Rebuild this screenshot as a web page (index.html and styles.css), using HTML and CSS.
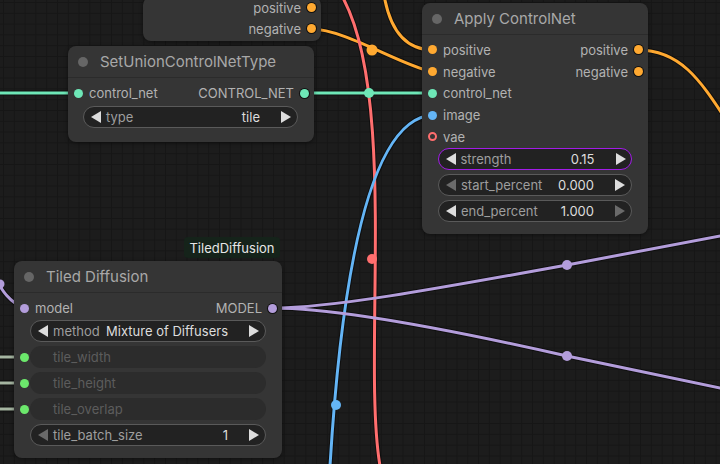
FILE: index.html
```html
<!DOCTYPE html>
<html>
<head>
<meta charset="utf-8">
<link rel="stylesheet" href="styles.css">
</head>
<body>
<div class="canvas">
  <svg class="links" width="720" height="464" viewBox="0 0 720 464">
    <g class="outline">
      <path d="M-5,93 L78,93"/>
      <path d="M305,93 L433,93"/>
      <path d="M311,29 C345,29 400,65 433,72"/>
      <path d="M384,-5 C390,30 405,50 433,50"/>
      <path d="M638,50 C680,50 700,80 725,118"/>
      <path d="M343,-2 C398,100 362,360 380,466"/>
      <path d="M433,115 C365,118 340,300 330,466"/>
      <path d="M273,308 C330,308 430,290 567,265 L725,235"/>
      <path d="M273,308 C330,308 430,325 567,356 L725,389"/>
      <path d="M-10,270 C0,285 5,300 24,308"/>
      <path d="M-5,357 L24,357"/>
      <path d="M-5,383 L24,383"/>
      <path d="M-5,409 L24,409"/>
    </g>
    <g class="link">
      <path class="l-cn" d="M-5,93 L78,93"/>
      <path class="l-cn" d="M305,93 L433,93"/>
      <path class="l-cond" d="M311,29 C345,29 400,65 433,72"/>
      <path class="l-cond" d="M384,-5 C390,30 405,50 433,50"/>
      <path class="l-cond" d="M638,50 C680,50 700,80 725,118"/>
      <path class="l-vae" d="M343,-2 C398,100 362,360 380,466"/>
      <path class="l-img" d="M433,115 C365,118 340,300 330,466"/>
      <path class="l-model" d="M273,308 C330,308 430,290 567,265 L725,235"/>
      <path class="l-model" d="M273,308 C330,308 430,325 567,356 L725,389"/>
      <path class="l-model" d="M-10,270 C0,285 5,300 24,308"/>
      <path class="l-int" d="M-5,357 L24,357"/>
      <path class="l-int" d="M-5,383 L24,383"/>
      <path class="l-int" d="M-5,409 L24,409"/>
    </g>
    <g class="mid">
      <circle class="f-cn" cx="369" cy="93" r="5"/>
      <circle class="f-cond" cx="372" cy="50" r="5.5"/>
      <circle class="f-vae" cx="372" cy="259" r="5"/>
      <circle class="f-img" cx="336" cy="405" r="5"/>
      <circle class="f-model" cx="567" cy="265" r="5"/>
      <circle class="f-model" cx="567" cy="356" r="5"/>
      <circle class="f-model" cx="0" cy="284" r="4.5"/>
    </g>
  </svg>

  <!-- partial node at top -->
  <div class="node node-top">
    <div class="slots">
      <div class="row row21"><span></span><span class="out">positive<i class="dot cond ring"></i></span></div>
      <div class="row row21"><span></span><span class="out">negative<i class="dot cond ring"></i></span></div>
    </div>
  </div>

  <!-- SetUnionControlNetType -->
  <div class="node node-union">
    <div class="title"><i class="tdot"></i><span>SetUnionControlNetType</span></div>
    <div class="body">
      <div class="row"><span class="in"><i class="dot cn"></i>control_net</span><span class="out">CONTROL_NET<i class="dot cn ring"></i></span></div>
      <div class="widgets gap2">
        <div class="widget">
          <svg class="arr" viewBox="0 0 10 12"><path d="M10,0 L10,12 L0,6 Z"/></svg>
          <span class="wl">type</span><span class="sp"></span><span class="wv">tile</span>
          <svg class="arr" viewBox="0 0 10 12"><path d="M0,0 L0,12 L10,6 Z"/></svg>
        </div>
      </div>
    </div>
  </div>

  <!-- Apply ControlNet -->
  <div class="node node-apply">
    <div class="title"><i class="tdot"></i><span>Apply ControlNet</span></div>
    <div class="body">
      <div class="row rowa"><span class="in"><i class="dot cond"></i>positive</span><span class="out">positive<i class="dot cond ring"></i></span></div>
      <div class="row rowa"><span class="in"><i class="dot cond"></i>negative</span><span class="out">negative<i class="dot cond ring"></i></span></div>
      <div class="row rowa"><span class="in"><i class="dot cn"></i>control_net</span></div>
      <div class="row rowa"><span class="in"><i class="dot img"></i>image</span></div>
      <div class="row rowa"><span class="in"><i class="dot vae hollow"></i>vae</span></div>
      <div class="widgets gap0">
        <div class="widget active">
          <svg class="arr" viewBox="0 0 10 12"><path d="M10,0 L10,12 L0,6 Z"/></svg>
          <span class="wl">strength</span><span class="sp"></span><span class="wv">0.15</span>
          <svg class="arr" viewBox="0 0 10 12"><path d="M0,0 L0,12 L10,6 Z"/></svg>
        </div>
        <div class="widget">
          <svg class="arr dim" viewBox="0 0 10 12"><path d="M10,0 L10,12 L0,6 Z"/></svg>
          <span class="wl">start_percent</span><span class="sp"></span><span class="wv">0.000</span>
          <svg class="arr" viewBox="0 0 10 12"><path d="M0,0 L0,12 L10,6 Z"/></svg>
        </div>
        <div class="widget">
          <svg class="arr" viewBox="0 0 10 12"><path d="M10,0 L10,12 L0,6 Z"/></svg>
          <span class="wl">end_percent</span><span class="sp"></span><span class="wv">1.000</span>
          <svg class="arr dim" viewBox="0 0 10 12"><path d="M0,0 L0,12 L10,6 Z"/></svg>
        </div>
      </div>
    </div>
  </div>

  <div class="badge">TiledDiffusion</div>

  <!-- Tiled Diffusion -->
  <div class="node node-tiled">
    <div class="title"><i class="tdot"></i><span>Tiled Diffusion</span></div>
    <div class="body">
      <div class="row"><span class="in"><i class="dot model"></i>model</span><span class="out">MODEL<i class="dot model ring"></i></span></div>
      <div class="widgets gap1">
        <div class="widget">
          <svg class="arr" viewBox="0 0 10 12"><path d="M10,0 L10,12 L0,6 Z"/></svg>
          <span class="wl">method</span><span class="sp"></span><span class="wv">Mixture of Diffusers</span>
          <svg class="arr" viewBox="0 0 10 12"><path d="M0,0 L0,12 L10,6 Z"/></svg>
        </div>
        <div class="wrow"><i class="dot int wdot"></i><div class="widget off"><span class="wl">tile_width</span></div></div>
        <div class="wrow"><i class="dot int wdot"></i><div class="widget off"><span class="wl">tile_height</span></div></div>
        <div class="wrow"><i class="dot int wdot"></i><div class="widget off"><span class="wl">tile_overlap</span></div></div>
        <div class="widget">
          <svg class="arr dim" viewBox="0 0 10 12"><path d="M10,0 L10,12 L0,6 Z"/></svg>
          <span class="wl">tile_batch_size</span><span class="sp"></span><span class="wv">1</span>
          <svg class="arr" viewBox="0 0 10 12"><path d="M0,0 L0,12 L10,6 Z"/></svg>
        </div>
      </div>
    </div>
  </div>
</div>
</body>
</html>
```

FILE: styles.css
```css
* { box-sizing: border-box; }
html, body { margin: 0; padding: 0; background: #1c1c1c; }
body { font-family: Inter, "Noto Sans", sans-serif; }

.canvas {
  position: relative;
  width: 720px;
  height: 464px;
  overflow: hidden;
  background-color: #1c1c1c;
  background-image:
    linear-gradient(to right, #161616 1px, transparent 1px),
    linear-gradient(to bottom, #161616 1px, transparent 1px);
  background-size: 10.8px 10.8px;
  background-position: 3px 2px;
}

.links { position: absolute; left: 0; top: 0; }
.outline path { fill: none; stroke: #0b0b0b; stroke-width: 5; stroke-opacity: 0.75; }
.link path { fill: none; stroke-width: 3; }
.l-cn { stroke: #6ee7b7; }
.l-cond { stroke: #ffa931; }
.l-vae { stroke: #ff6e6e; }
.l-img { stroke: #64b5f6; }
.l-model { stroke: #b39ddb; }
.l-int { stroke: #a5b5a1; }
.f-cn { fill: #6ee7b7; }
.f-cond { fill: #ffa931; }
.f-vae { fill: #ff6e6e; }
.f-img { fill: #64b5f6; }
.f-model { fill: #b39ddb; }

.node {
  position: absolute;
  background: #353535;
  border-radius: 8px;
  box-shadow: 0 1px 4px rgba(0, 0, 0, 0.45);
  color: #b2b2b2;
  font-size: 13px;
}
.node-top { left: 143px; top: -3px; width: 178px; padding-bottom: 2px; }
.node-union { left: 68px; top: 46px; width: 246px; }
.node-apply { left: 422px; top: 3px; width: 226px; }
.node-tiled { left: 14px; top: 261px; width: 268px; }

.title {
  height: 32px;
  display: flex;
  align-items: center;
  gap: 12px;
  padding-left: 10px;
  border-bottom: 1px solid #2b2b2b;
  font-size: 15px;
  color: #a8a8a8;
}
.tdot { display: block; width: 10px; height: 10px; border-radius: 50%; background: #666666; }

.body { padding: 4px 0 12px; }
.node-union .body { padding-bottom: 14px; }

.row {
  height: 22px;
  display: flex;
  align-items: center;
  justify-content: space-between;
  white-space: nowrap;
}
.row21 { height: 21px; }
.rowa { height: 21.75px; }
.in { display: flex; align-items: center; gap: 6px; padding-left: 6px; }
.out { display: flex; align-items: center; gap: 6px; padding-right: 5px; }

.dot { display: block; width: 9px; height: 9px; border-radius: 50%; flex: none; }
.dot.ring { box-shadow: 0 0 0 1px #121212; }
.cond { background: #ffa931; }
.cn { background: #6ee7b7; }
.img { background: #64b5f6; }
.vae { background: #ff6e6e; }
.hollow { background: #353535; border: 2px solid #ff6e6e; }
.model { background: #b39ddb; }
.int { background: #6ce86c; }

.widgets { display: flex; flex-direction: column; gap: 4px; padding: 0 16px; }
.gap0 { margin-top: 0; }
.gap1 { margin-top: 1px; }
.gap2 { margin-top: 2px; padding-left: 15px; }

.widget {
  height: 22px;
  border-radius: 11px;
  border: 1px solid #5a5a5a;
  background: #222222;
  display: flex;
  align-items: center;
  padding: 0 6px 0 7px;
  white-space: nowrap;
}
.widget.active { border: 1.5px solid #a21ce8; padding-left: 6.5px; padding-right: 5.5px; }
.widget.off { border-color: transparent; background: #2c2c2c; padding-left: 22px; flex: 1; }
.widget.off .wl { color: #5c5c5c; margin-left: 0; }
.wrow { position: relative; display: flex; }
.wdot { position: absolute; left: -10.5px; top: 6.5px; }

.arr { width: 10px; height: 12px; flex: none; }
.arr path { fill: #dddddd; }
.arr.dim path { fill: #6a6a6a; }
.wl { color: #9e9e9e; margin-left: 5px; }
.sp { flex: 1; }
.wv { color: #dddddd; margin-right: 21px; }

.badge {
  position: absolute;
  left: 184px;
  top: 237px;
  width: 96px;
  height: 21px;
  border-radius: 4px;
  background: #15231a;
  color: #e6e6e6;
  font-size: 13px;
  display: flex;
  align-items: center;
  justify-content: center;
}
```
